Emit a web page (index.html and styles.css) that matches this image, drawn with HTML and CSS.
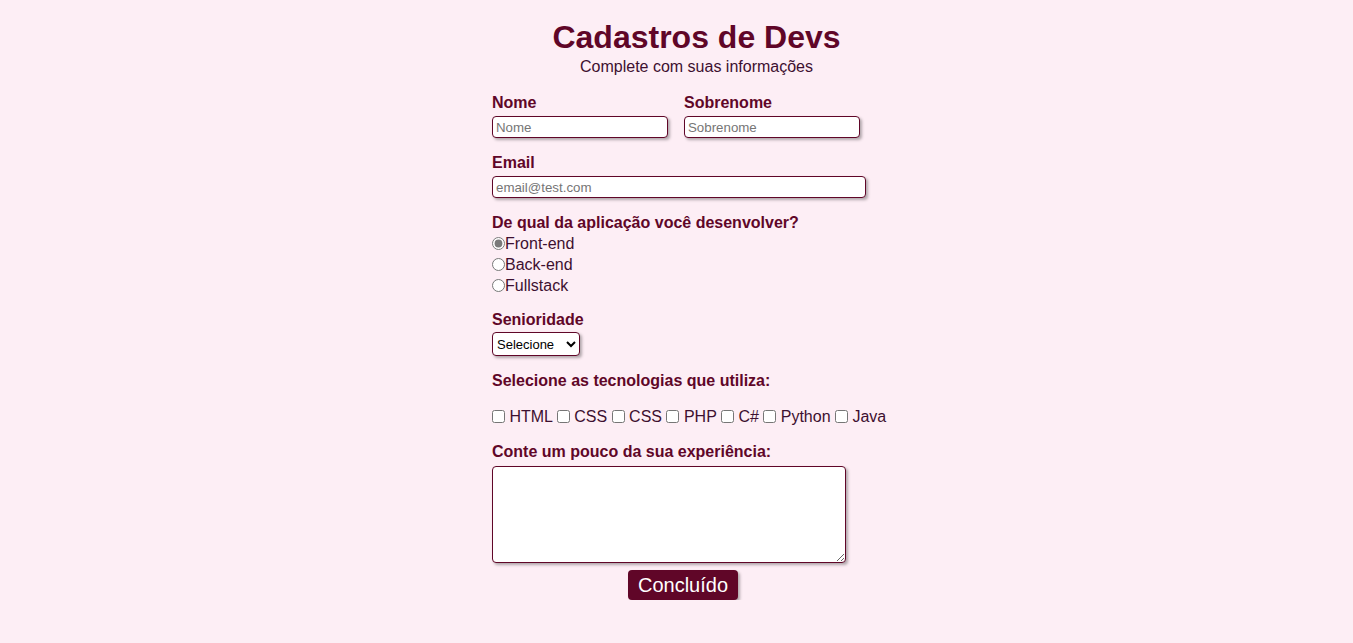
FILE: index.html
```html
<!DOCTYPE html>
<html lang="pt-BR">
<head>
<meta charset="utf-8">
<title>Cadastros de Devs</title>
<link rel="stylesheet" href="styles.css">
</head>
<body>
<main class="page">
  <header class="head">
    <h1 class="title">Cadastros de Devs</h1>
    <p class="subtitle">Complete com suas informações</p>
  </header>
  <form class="form">
    <div class="row">
      <div class="field">
        <label class="label" for="nome">Nome</label>
        <input class="input short" id="nome" type="text" placeholder="Nome">
      </div>
      <div class="field">
        <label class="label" for="sobrenome">Sobrenome</label>
        <input class="input short" id="sobrenome" type="text" placeholder="Sobrenome">
      </div>
    </div>
    <div class="field">
      <label class="label" for="email">Email</label>
      <input class="input long" id="email" type="email" placeholder="email@test.com">
    </div>
    <div class="field radios">
      <span class="label tight">De qual da aplicação você desenvolver?</span>
      <label class="radio"><input type="radio" name="area" checked>Front-end</label>
      <label class="radio"><input type="radio" name="area">Back-end</label>
      <label class="radio"><input type="radio" name="area">Fullstack</label>
    </div>
    <div class="field sen">
      <label class="label sel-label" for="sen">Senioridade</label>
      <select class="select" id="sen">
        <option>Selecione</option>
        <option>Júnior</option>
        <option>Pleno</option>
        <option>Sênior</option>
      </select>
    </div>
    <div class="field techs">
      <span class="label">Selecione as tecnologias que utiliza:</span>
      <div class="checks"><input type="checkbox"> HTML <input type="checkbox"> CSS <input type="checkbox"> CSS <input type="checkbox"> PHP <input type="checkbox"> C# <input type="checkbox"> Python <input type="checkbox"> Java</div>
    </div>
    <div class="field exp">
      <label class="label" for="exp">Conte um pouco da sua experiência:</label>
      <textarea class="textarea" id="exp"></textarea>
    </div>
    <div class="actions">
      <button class="button" type="button">Concluído</button>
    </div>
  </form>
</main>
</body>
</html>
```
FILE: styles.css
```css
html, body {
  margin: 0;
  padding: 0;
}
body {
  background: #fdeef5;
  color: #600628;
  font-family: "Liberation Sans", Arial, sans-serif;
  font-size: 16px;
}
.page {
  width: 409px;
  margin: 0 auto;
  padding: 19px 0 0 40px;
}
.head {
  text-align: center;
}
.title {
  margin: 0;
  font-size: 32px;
  line-height: 37px;
  font-weight: bold;
}
.subtitle {
  margin: 2px 0 0;
  font-size: 16px;
  line-height: 18px;
  color: #3d1030;
}
.form {
  display: flex;
  flex-direction: column;
  margin-top: 18px;
}
.row {
  display: flex;
  gap: 16px;
}
.field {
  display: flex;
  flex-direction: column;
  align-items: flex-start;
  margin-bottom: 16px;
}
.label {
  font-weight: bold;
  font-size: 16px;
  line-height: 18px;
  margin-bottom: 4px;
}
.label.tight {
  margin-bottom: 1px;
}
.label.sel-label {
  margin-bottom: 3px;
}
.input {
  box-sizing: border-box;
  height: 22px;
  border: 1px solid #600628;
  border-radius: 4px;
  box-shadow: 2px 2px 3px rgba(0,0,0,0.3);
  background: #fff;
  font-family: "Liberation Sans", Arial, sans-serif;
  font-size: 13.3px;
  padding: 1px 3px;
  outline: none;
}
.input::placeholder {
  color: #767676;
}
.short {
  width: 176px;
}
.long {
  width: 374px;
}
.radios {
  margin-bottom: 15px;
}
.radio {
  display: flex;
  align-items: center;
  line-height: 21px;
  color: #3d1030;
}
.radio input {
  margin: 0;
  width: 13px;
  height: 13px;
  accent-color: #7a7a7a;
}
.select {
  height: 24px;
  width: 88px;
  border: 1px solid #600628;
  border-radius: 4px;
  box-shadow: 2px 2px 3px rgba(0,0,0,0.3);
  background: #fff;
  font-family: "Liberation Sans", Arial, sans-serif;
  font-size: 13px;
  color: #000;
}
.checks {
  margin-top: 14px;
  color: #3d1030;
  line-height: 18px;
  white-space: nowrap;
}
.checks input {
  margin: 0;
  width: 13px;
  height: 13px;
  vertical-align: -1px;
}
.sen {
  margin-bottom: 16px;
}
.techs {
  margin-bottom: 17px;
}
.textarea {
  box-sizing: border-box;
  width: 354px;
  height: 97px;
  border: 1px solid #600628;
  border-radius: 4px;
  box-shadow: 2px 2px 3px rgba(0,0,0,0.3);
  background: #fff;
  margin-top: 1px;
}
.exp {
  margin-bottom: 7px;
}
.actions {
  width: 382px;
  display: flex;
  justify-content: center;
}
.button {
  height: 30px;
  padding: 0 10px;
  border: none;
  border-radius: 4px;
  background: #600628;
  color: #fff;
  font-family: "Liberation Sans", Arial, sans-serif;
  font-size: 20px;
  box-shadow: 2px 2px 3px rgba(0,0,0,0.3);
}
```
